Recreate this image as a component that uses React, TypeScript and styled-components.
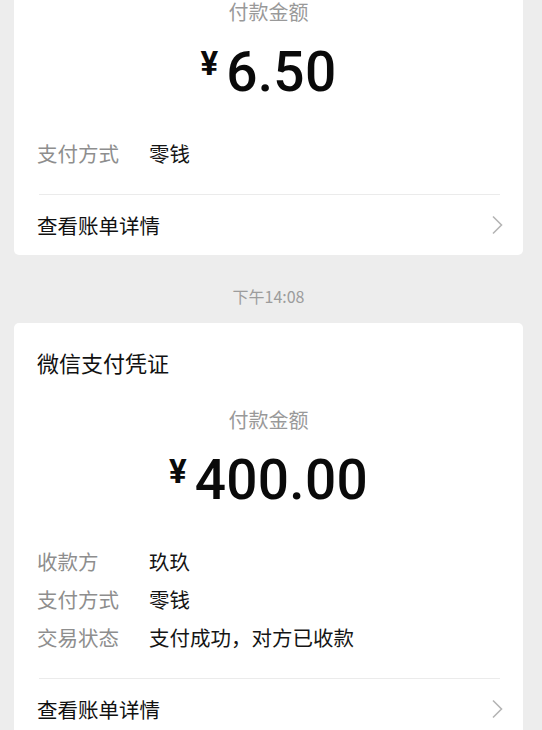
import styled, { createGlobalStyle } from 'styled-components';

type Row = {
    label: string;
    value: string;
};

type ReceiptProps = {
    amount: string;
    rows: Row[];
    first?: boolean;
};

const GlobalStyle = createGlobalStyle`
    html, body {
        margin: 0;
        padding: 0;
        background: #ededed;
        font-family: "Noto Sans CJK SC", "Noto Sans", sans-serif;
        overflow: hidden;
    }
`;

const Page = styled.div`
    display: flex;
    flex-direction: column;
    padding: 0 19px 0 14px;
    height: 730px;
    overflow: hidden;
`;

const Card = styled.div<{ $first?: boolean }>`
    background: #ffffff;
    border-radius: 5px;
    padding: 0 23px;
    margin-top: ${(p) => (p.$first ? '-85px' : '0')};
    flex-shrink: 0;
`;

const Title = styled.div`
    padding-top: 24px;
    font-size: 22px;
    line-height: 30px;
    color: #111111;
`;

const AmountLabel = styled.div`
    margin-top: 29px;
    text-align: center;
    font-size: 20px;
    line-height: 28px;
    color: #999999;
`;

const AmountLine = styled.div`
    margin-top: 19px;
    display: flex;
    justify-content: center;
    align-items: flex-start;
    color: #0a0a0a;
    font-family: Roboto, "Liberation Sans", sans-serif;
`;

const Currency = styled.span`
    font-size: 33px;
    line-height: 33px;
    font-weight: 700;
    margin-top: 2px;
    margin-right: 8px;
`;

const Digits = styled.span`
    font-size: 55px;
    line-height: 55px;
    font-weight: 500;
    letter-spacing: 0.3px;
`;

const Rows = styled.div`
    margin-top: 34px;
`;

const InfoRow = styled.div`
    display: grid;
    grid-template-columns: 112px 1fr;
    font-size: 20.5px;
    line-height: 38px;
`;

const Label = styled.span`
    color: #8e8e8e;
`;

const Value = styled.span`
    color: #151515;
`;

const Divider = styled.div`
    margin: 22px 0 0 2px;
    height: 1px;
    background: #ebebeb;
`;

const DetailLink = styled.div`
    height: 60px;
    display: flex;
    align-items: center;
    justify-content: space-between;
    font-size: 20.5px;
    color: #111111;
`;

const Chevron = styled.svg`
    width: 12px;
    height: 20px;
    margin-right: -3px;
`;

const Time = styled.div`
    margin: 31px 0 17px;
    text-align: center;
    font-size: 16px;
    line-height: 20px;
    color: #9c9c9c;
`;

const Receipt = ({ amount, rows, first }: ReceiptProps) => {
    return (
        <Card $first={first}>
            <Title>微信支付凭证</Title>
            <AmountLabel>付款金额</AmountLabel>
            <AmountLine>
                <Currency>¥</Currency>
                <Digits>{amount}</Digits>
            </AmountLine>
            <Rows>
                {rows.map((r) => (
                    <InfoRow key={r.label}>
                        <Label>{r.label}</Label>
                        <Value>{r.value}</Value>
                    </InfoRow>
                ))}
            </Rows>
            <Divider />
            <DetailLink>
                <span>查看账单详情</span>
                <Chevron viewBox="0 0 12 20">
                    <polyline
                        points="2,1.5 10.5,10 2,18.5"
                        fill="none"
                        stroke="#b5b5b5"
                        strokeWidth="1.6"
                    />
                </Chevron>
            </DetailLink>
        </Card>
    );
};

const App = () => {
    return (
        <>
            <GlobalStyle />
            <Page>
                <Receipt first amount="6.50" rows={[{ label: '支付方式', value: '零钱' }]} />
                <Time>下午14:08</Time>
                <Receipt
                    amount="400.00"
                    rows={[
                        { label: '收款方', value: '玖玖' },
                        { label: '支付方式', value: '零钱' },
                        { label: '交易状态', value: '支付成功，对方已收款' },
                    ]}
                />
            </Page>
        </>
    );
};

export default App;
